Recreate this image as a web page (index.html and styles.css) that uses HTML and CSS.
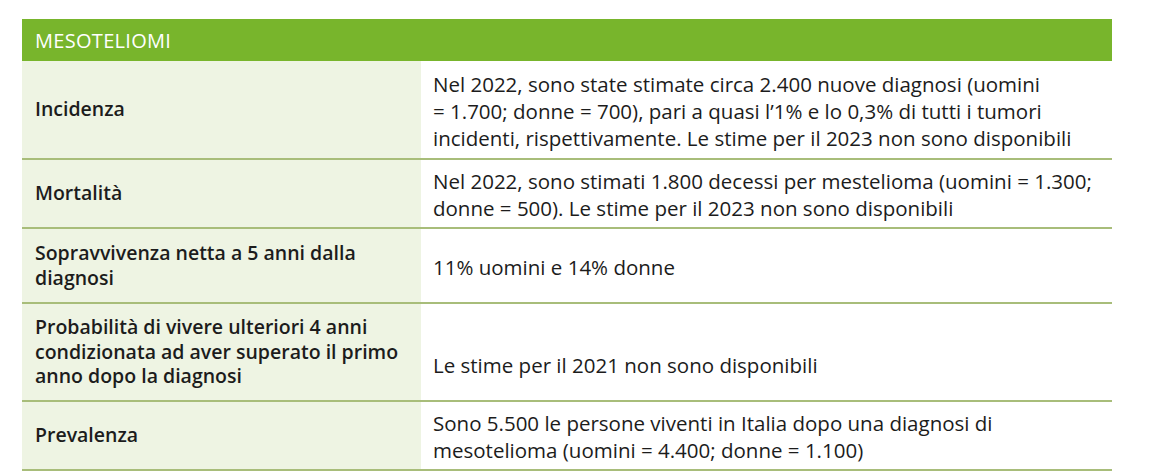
FILE: index.html
```html
<!DOCTYPE html>
<html lang="it">
<head>
<meta charset="utf-8">
<title>Mesoteliomi</title>
<link rel="stylesheet" href="styles.css">
</head>
<body>
<div class="page">
  <div class="table">
    <div class="head">MESOTELIOMI</div>
    <div class="row r1">
      <div class="label">Incidenza</div>
      <div class="value">Nel 2022, sono state stimate circa 2.400 nuove diagnosi (uomini<br>= 1.700; donne = 700), pari a quasi l’1% e lo 0,3% di tutti i tumori<br>incidenti, rispettivamente. Le stime per il 2023 non sono disponibili</div>
    </div>
    <div class="row r2">
      <div class="label">Mortalità</div>
      <div class="value">Nel 2022, sono stimati 1.800 decessi per mestelioma (uomini = 1.300;<br>donne = 500). Le stime per il 2023 non sono disponibili</div>
    </div>
    <div class="row r3">
      <div class="label">Sopravvivenza netta a 5 anni dalla<br>diagnosi</div>
      <div class="value">11% uomini e 14% donne</div>
    </div>
    <div class="row r4">
      <div class="label">Probabilità di vivere ulteriori 4 anni<br>condizionata ad aver superato il primo<br>anno dopo la diagnosi</div>
      <div class="value low">Le stime per il 2021 non sono disponibili</div>
    </div>
    <div class="row r5">
      <div class="label">Prevalenza</div>
      <div class="value">Sono 5.500 le persone viventi in Italia dopo una diagnosi di<br>mesotelioma (uomini = 4.400; donne = 1.100)</div>
    </div>
  </div>
</div>
</body>
</html>
```
FILE: styles.css
```css
html, body {
  margin: 0;
  padding: 0;
  background: #ffffff;
}
.page {
  padding: 19px 0 0 22px;
  font-family: "Open Sans", "Liberation Sans", sans-serif;
  color: #1c1c1c;
}
.table {
  width: 1090px;
  display: flex;
  flex-direction: column;
}
.head {
  background: #78b52c;
  color: #ffffff;
  height: 42px;
  display: flex;
  align-items: center;
  padding-left: 13px;
  font-size: 20px;
  letter-spacing: 0.3px;
}
.row {
  display: grid;
  grid-template-columns: 399px 1fr;
  border-bottom: 2px solid #a8bd7a;
}
.label {
  background: #eef4e3;
  padding: 0 13px;
  font-size: 19.5px;
  font-weight: 600;
  line-height: 24.5px;
  display: flex;
  align-items: center;
  white-space: nowrap;
}
.value {
  padding: 3px 12px 0;
  font-size: 20.5px;
  line-height: 27px;
  white-space: nowrap;
  align-self: center;
}
.value.low {
  align-self: end;
  padding-bottom: 21px;
}
.r1 { height: 97px; }
.r2 { height: 67px; }
.r3 { height: 73px; }
.r4 { height: 96px; }
.r5 { height: 67px; }
```
